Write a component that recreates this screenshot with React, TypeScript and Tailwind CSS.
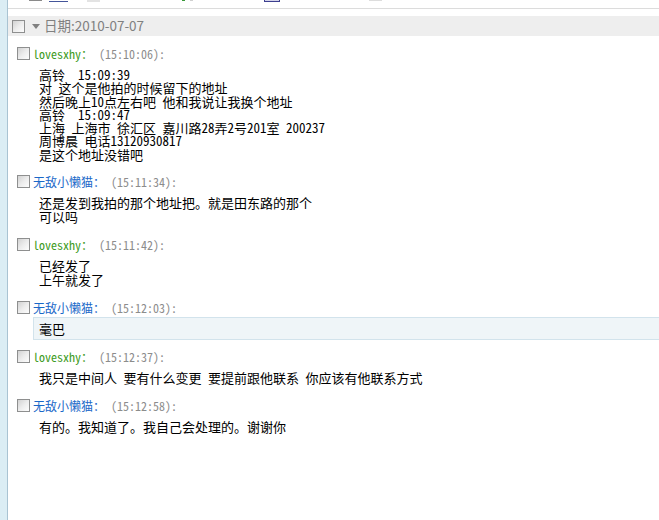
const messages = [
  {
    name: "lovesxhy：",
    color: "text-[#3d9b23]",
    time: "(15:10:06):",
    lead: "leading-[13.3px]",
    lines: [
      "高铃  15:09:39",
      "对 这个是他拍的时候留下的地址",
      "然后晚上10点左右吧 他和我说让我换个地址",
      "高铃  15:09:47",
      "上海 上海市 徐汇区 嘉川路28弄2号201室 200237",
      "周博晨 电话13120930817",
      "是这个地址没错吧",
    ],
  },
  {
    name: "无敌小懒猫：",
    color: "text-[#1a68c8]",
    time: "(15:11:34):",
    lead: "leading-[14px]",
    lines: ["还是发到我拍的那个地址把。就是田东路的那个", "可以吗"],
  },
  {
    name: "lovesxhy：",
    color: "text-[#3d9b23]",
    time: "(15:11:42):",
    lead: "leading-[14px]",
    lines: ["已经发了", "上午就发了"],
  },
  {
    name: "无敌小懒猫：",
    color: "text-[#1a68c8]",
    time: "(15:12:03):",
    lead: "leading-[14px]",
    lines: ["毫巴"],
    active: true,
  },
  {
    name: "lovesxhy：",
    color: "text-[#3d9b23]",
    time: "(15:12:37):",
    lead: "leading-[14px]",
    lines: ["我只是中间人 要有什么变更 要提前跟他联系 你应该有他联系方式"],
  },
  {
    name: "无敌小懒猫：",
    color: "text-[#1a68c8]",
    time: "(15:12:58):",
    lead: "leading-[14px]",
    lines: ["有的。我知道了。我自己会处理的。谢谢你"],
  },
];

function Check() {
  return (
    <span className="block w-[13px] h-[13px] shrink-0 border border-[#8e8f8f] bg-gradient-to-br from-[#d2d2d2] via-[#ececec] to-[#fdfdfd]" />
  );
}

export default function App() {
  return (
    <div className="flex w-[659px] h-[520px] overflow-hidden bg-white text-[12px] text-black font-['Noto_Sans_Mono_CJK_SC','Noto_Sans_CJK_SC',monospace]">
      <div className="w-[8px] shrink-0 bg-[#dbedf4] border-r border-[#a9c3d2]" />
      <div className="flex-1 min-w-0">
        {/* cut-off toolbar */}
        <div className="flex items-start h-[9px] border-b border-[#dcdcdc]">
          <span className="ml-[21px] w-[13px] h-[1px] bg-[#8a8a8a]" />
          <span className="ml-[7px] w-[19px] h-[2px] border-b border-[#44559a]" />
          <span className="ml-[19px] w-[13px] h-[2px] bg-[#e3e3e3]" />
          <span className="ml-[82px] w-[3px] h-[1px] bg-[#3a9a3a]" />
          <span className="ml-[5px] w-[3px] h-[1px] bg-[#d0d0d0]" />
          <span className="ml-[71px] w-[16px] h-[2px] border-x border-b border-[#3d3f8f] bg-[#d4d4ea]" />
          <span className="ml-[89px] w-[13px] h-[1px] bg-[#dddddd]" />
        </div>

        <div className="mt-[7px] h-[20px] bg-[#eeeeee] flex items-center pl-[4px]">
          <Check />
          <span className="ml-[7px] w-0 h-0 border-l-[4px] border-r-[4px] border-t-[5px] border-l-transparent border-r-transparent border-t-[#808080]" />
          <span className="ml-[4px] text-[13.5px] text-[#808080] leading-none font-['Noto_Sans_CJK_SC',sans-serif]">
            日期:2010-07-07
          </span>
        </div>

        <div className="pt-[11px]">
          {messages.map((m, i) => (
            <div key={i} className="pl-[9px]">
              <div className="flex items-center h-[13px] gap-[3px] leading-none whitespace-pre">
                <Check />
                <span>
                  <span className={m.color}>{m.name}</span>
                  <span className="text-[#8c8c8c]"> {m.time}</span>
                </span>
              </div>
              <div
                className={
                  "ml-[16px] mt-[3px] mb-[10px] border border-r-0 pl-[5px] pt-[4px] pb-[3px] whitespace-pre text-[13px] " +
                  m.lead +
                  (m.active ? " bg-[#eff5f8] border-[#d2e3ec]" : " border-transparent")
                }
              >
                {m.lines.map((l, j) => (
                  <div key={j}>{l}</div>
                ))}
              </div>
            </div>
          ))}
        </div>
      </div>
    </div>
  );
}
